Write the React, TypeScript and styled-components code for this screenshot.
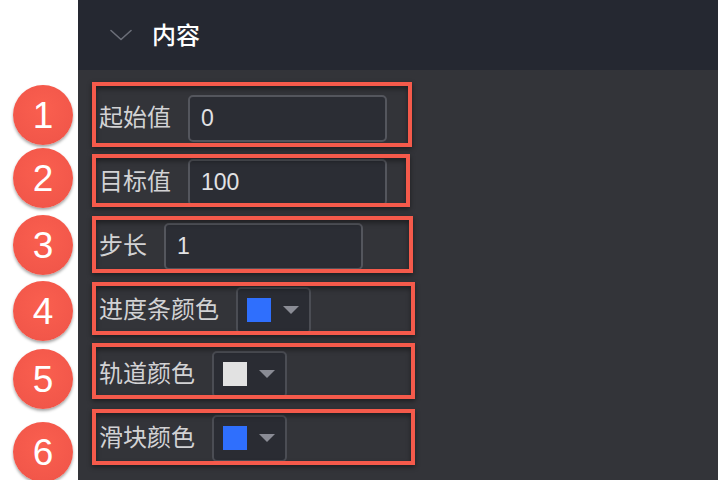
import React from "react";
import styled, { createGlobalStyle } from "styled-components";

const GlobalStyle = createGlobalStyle`
  html, body { margin: 0; padding: 0; background: #ffffff; }
  body { font-family: "Liberation Sans", "Noto Sans CJK SC", sans-serif; }
`;

const Page = styled.div`
  display: flex;
  width: 718px;
  height: 480px;
  overflow: hidden;
  background: #ffffff;
`;

const Gutter = styled.div`
  width: 78px;
  flex: none;
  background: #ffffff;
`;

const Panel = styled.div`
  flex: 1;
  display: flex;
  flex-direction: column;
  background: #333439;
`;

const Header = styled.div`
  height: 70px;
  flex: none;
  display: flex;
  align-items: center;
  gap: 20px;
  padding-left: 32px;
  background: #252831;
`;

const Title = styled.span`
  font-family: "Liberation Sans", "Noto Sans CJK SC", sans-serif;
  font-size: 24px;
  font-weight: 500;
  color: #ffffff;
  line-height: 1;
  margin-top: 1px;
`;

const Body = styled.div`
  display: flex;
  flex-direction: column;
  padding-top: 16px;
`;

const Row = styled.div`
  position: relative;
  height: 64px;
  display: flex;
  align-items: center;
  padding-left: 21px;
`;

const Label = styled.span`
  font-size: 24px;
  color: #d2d2d4;
  line-height: 1;
  margin-right: 17px;
  white-space: nowrap;
`;

const Input = styled.div`
  box-sizing: border-box;
  width: 199px;
  height: 47px;
  display: flex;
  align-items: center;
  padding-left: 11px;
  border: 2px solid #54565d;
  border-radius: 5px;
  background: #2b2d34;
  font-size: 23px;
  color: #e2e2e4;
`;

const Picker = styled.div`
  box-sizing: border-box;
  width: 75px;
  height: 47px;
  display: flex;
  align-items: center;
  gap: 12px;
  padding-left: 9px;
  border: 2px solid #4b4d54;
  border-radius: 5px;
  background: #2a2c33;
`;

const Swatch = styled.div<{ $color: string }>`
  width: 24px;
  height: 24px;
  background: ${(p) => p.$color};
`;

const Caret = styled.div`
  width: 0;
  height: 0;
  border-left: 8px solid transparent;
  border-right: 8px solid transparent;
  border-top: 8px solid #8a8c95;
`;

const Callout = styled.div`
  position: absolute;
  left: 14px;
  box-sizing: border-box;
  border: 4px solid #f55a4b;
  box-shadow: 0 2px 5px rgba(0, 0, 0, 0.45), inset 0 3px 5px rgba(0, 0, 0, 0.4);
  pointer-events: none;
`;

const Badge = styled.div`
  position: absolute;
  left: -65px;
  width: 60px;
  height: 60px;
  border-radius: 50%;
  background: radial-gradient(circle at 50% 40%, #fa5f4f 0%, #f2574a 70%, #e85145 100%);
  box-shadow: 0 2px 3px rgba(0, 0, 0, 0.35);
  display: flex;
  align-items: center;
  justify-content: center;
  font-family: "Liberation Sans", Arial, sans-serif;
  font-size: 37px;
  color: #ffffff;
  line-height: 1;
`;

type Item = {
  n: number;
  label: string;
  value?: string;
  color?: string;
  box: { top: number; height: number; width: number };
  badgeTop: number;
};

const items: Item[] = [
  { n: 1, label: "起始值", value: "0", box: { top: -4, height: 65, width: 320 }, badgeTop: -1 },
  { n: 2, label: "目标值", value: "100", box: { top: 4, height: 53, width: 318 }, badgeTop: -2 },
  { n: 3, label: "步长", value: "1", box: { top: 2, height: 57, width: 321 }, badgeTop: 1 },
  { n: 4, label: "进度条颜色", color: "#2f6ffd", box: { top: 4, height: 53, width: 323 }, badgeTop: 3 },
  { n: 5, label: "轨道颜色", color: "#e2e2e2", box: { top: 1, height: 56, width: 323 }, badgeTop: 7 },
  { n: 6, label: "滑块颜色", color: "#2f6ffd", box: { top: 3, height: 56, width: 323 }, badgeTop: 16 },
];

const Chevron = () => (
  <svg width="22" height="12" viewBox="0 0 22 12" fill="none">
    <path d="M1 1.5 L11 10.5 L21 1.5" stroke="#6c6f79" strokeWidth="1.6" strokeLinecap="round" strokeLinejoin="round" />
  </svg>
);

export default function App() {
  return (
    <Page>
      <GlobalStyle />
      <Gutter />
      <Panel>
        <Header>
          <Chevron />
          <Title>内容</Title>
        </Header>
        <Body>
          {items.map((it) => (
            <Row key={it.n}>
              <Label>{it.label}</Label>
              {it.color ? (
                <Picker>
                  <Swatch $color={it.color} />
                  <Caret />
                </Picker>
              ) : (
                <Input>{it.value}</Input>
              )}
              <Callout style={{ top: it.box.top, height: it.box.height, width: it.box.width }} />
              <Badge style={{ top: it.badgeTop }}>{it.n}</Badge>
            </Row>
          ))}
        </Body>
      </Panel>
    </Page>
  );
}
